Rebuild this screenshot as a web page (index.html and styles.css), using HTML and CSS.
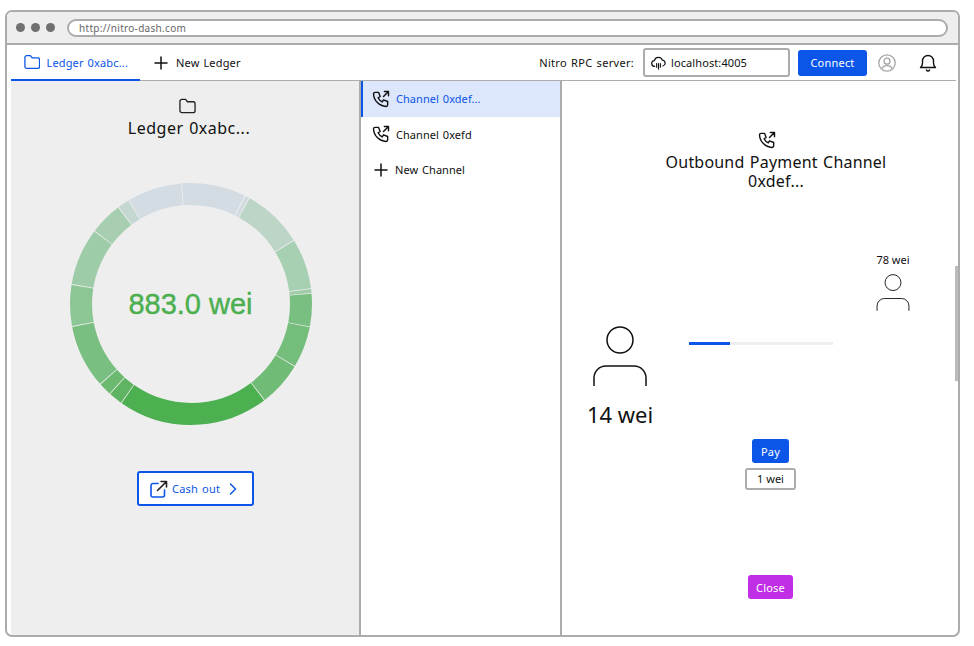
FILE: index.html
```html
<!DOCTYPE html>
<html lang="en">
<head>
    <meta charset="UTF-8">
    <meta name="viewport" content="width=device-width, initial-scale=1.0">
    <title>Nitro Dash</title>
    <link rel="stylesheet" href="styles.css">
</head>
<body>
    <svg class="defs" width="0" height="0">
        <symbol id="folder" viewBox="0 0 18 16">
            <path d="M3 1h4l2 2.500h6a2 2 0 0 1 2 2V13a2 2 0 0 1 -2 2H3a2 2 0 0 1 -2 -2V3a2 2 0 0 1 2 -2z" fill="none" stroke="currentColor" stroke-width="1.400" stroke-linejoin="round"/>
        </symbol>
        <symbol id="plus" viewBox="0 0 14 14">
            <path d="M7 1v12M1 7h12" fill="none" stroke="currentColor" stroke-width="1.500" stroke-linecap="round"/>
        </symbol>
        <symbol id="phone" viewBox="0 0 24 24">
            <path d="M5 4h4l2 5l-2.500 1.500a11 11 0 0 0 5 5l1.500 -2.500l5 2v4a2 2 0 0 1 -2 2a16 16 0 0 1 -15 -15a2 2 0 0 1 2 -2M15 9l6 -6M16 3h5v5" fill="none" stroke="currentColor" stroke-width="1.700" stroke-linecap="round" stroke-linejoin="round"/>
        </symbol>
        <symbol id="person" viewBox="0 0 54 62">
            <circle cx="27" cy="14" r="13" fill="none" stroke="currentColor" stroke-width="1.500"/>
            <path d="M1 60V52a12 12 0 0 1 12 -12h28a12 12 0 0 1 12 12v8" fill="none" stroke="currentColor" stroke-width="1.500"/>
        </symbol>
    </svg>

    <div class="window">
        <div class="chrome">
            <div class="dots"><span></span><span></span><span></span></div>
            <div class="url">http://nitro-dash.com</div>
        </div>

        <div class="topbar">
            <div class="tab active">
                <svg class="ic-folder"><use href="#folder"/></svg>
                <span>Ledger 0xabc...</span>
            </div>
            <div class="tab">
                <svg class="ic-plus"><use href="#plus"/></svg>
                <span>New Ledger</span>
            </div>
            <div class="rpc">
                <span class="rpc-label">Nitro RPC server:</span>
                <div class="rpc-input">
                    <svg class="ic-cloud" viewBox="0 0 16 16">
                        <path d="M4 11.500a3 3 0 0 1 -.4 -6a4.400 4.400 0 0 1 8.400 -.6a3.200 3.200 0 0 1 .6 6.300" fill="none" stroke="currentColor" stroke-width="1.300" stroke-linecap="round" stroke-linejoin="round"/>
                        <path d="M6 8.500v4M8 8.500v6M10 8.500v4" fill="none" stroke="currentColor" stroke-width="1.200" stroke-linecap="round"/>
                    </svg>
                    localhost:4005
                </div>
                <button class="btn btn-blue connect">Connect</button>
                <svg class="ic-avatar" viewBox="0 0 18 18">
                    <circle cx="9" cy="9" r="8.200" fill="none" stroke="#a6a6a6" stroke-width="1.300"/>
                    <circle cx="9" cy="7.200" r="3" fill="none" stroke="#a6a6a6" stroke-width="1.300"/>
                    <path d="M3.800 14.600c1 -2.400 2.800 -3 5.200 -3s4.200 .6 5.200 3" fill="none" stroke="#a6a6a6" stroke-width="1.300"/>
                </svg>
                <svg class="ic-bell" viewBox="0 0 18 18">
                    <path d="M1.500 13.500h15c-1.500 -1 -2 -2.500 -2 -4.500V7a5.500 5.500 0 0 0 -11 0v2c0 2 -.5 3.500 -2 4.500z" fill="none" stroke="currentColor" stroke-width="1.400" stroke-linejoin="round"/>
                    <path d="M7.500 16a1.600 1.600 0 0 0 3 0" fill="none" stroke="currentColor" stroke-width="1.400" stroke-linecap="round"/>
                </svg>
            </div>
        </div>

        <div class="main">
            <section class="ledger">
                <svg class="ic-folder-dark"><use href="#folder"/></svg>
                <h1 class="ledger-title">Ledger 0xabc...</h1>
                <div class="donut">
                    <svg viewBox="0 0 242 242" width="242" height="242">
                        <g class="ring" fill="none" stroke-width="22">
                            <circle cx="121" cy="121" r="110" pathLength="360" stroke="#d3dce3" stroke-dasharray="30.700 329.300" stroke-dashoffset="4.400"/>
                            <circle cx="121" cy="121" r="110" pathLength="360" stroke="#d1dbdf" stroke-dasharray="1.800 358.200" stroke-dashoffset="-26.800"/>
                            <circle cx="121" cy="121" r="110" pathLength="360" stroke="#bcd5c7" stroke-dasharray="29 331" stroke-dashoffset="-29"/>
                            <circle cx="121" cy="121" r="110" pathLength="360" stroke="#a7cfb2" stroke-dasharray="24 336" stroke-dashoffset="-58.400"/>
                            <circle cx="121" cy="121" r="110" pathLength="360" stroke="#a0ccaa" stroke-dasharray="1.900 358.100" stroke-dashoffset="-82.800"/>
                            <circle cx="121" cy="121" r="110" pathLength="360" stroke="#7abf82" stroke-dasharray="15.700 344.300" stroke-dashoffset="-85"/>
                            <circle cx="121" cy="121" r="110" pathLength="360" stroke="#74bd7b" stroke-dasharray="19.700 340.300" stroke-dashoffset="-101.100"/>
                            <circle cx="121" cy="121" r="110" pathLength="360" stroke="#70bb75" stroke-dasharray="21.200 338.800" stroke-dashoffset="-121.200"/>
                            <circle cx="121" cy="121" r="110" pathLength="360" stroke="#4caf50" stroke-dasharray="72.200 287.800" stroke-dashoffset="-142.800"/>
                            <circle cx="121" cy="121" r="110" pathLength="360" stroke="#5fb463" stroke-dasharray="6.500 353.500" stroke-dashoffset="-215.400"/>
                            <circle cx="121" cy="121" r="110" pathLength="360" stroke="#6cb970" stroke-dasharray="6 354" stroke-dashoffset="-222.300"/>
                            <circle cx="121" cy="121" r="110" pathLength="360" stroke="#7abf82" stroke-dasharray="30.400 329.600" stroke-dashoffset="-228.700"/>
                            <circle cx="121" cy="121" r="110" pathLength="360" stroke="#8cc694" stroke-dasharray="19.600 340.400" stroke-dashoffset="-259.500"/>
                            <circle cx="121" cy="121" r="110" pathLength="360" stroke="#9fcca8" stroke-dasharray="27.400 332.600" stroke-dashoffset="-279.500"/>
                            <circle cx="121" cy="121" r="110" pathLength="360" stroke="#a8ceb2" stroke-dasharray="15.600 344.400" stroke-dashoffset="-307.300"/>
                            <circle cx="121" cy="121" r="110" pathLength="360" stroke="#c4d7d0" stroke-dasharray="5.500 354.500" stroke-dashoffset="-323.300"/>
                            <circle cx="121" cy="121" r="110" pathLength="360" stroke="#d3dce3" stroke-dasharray="26 334" stroke-dashoffset="-329.200"/>
                        </g>
                    </svg>
                    <div class="donut-label">883.0 wei</div>
                </div>
                <button class="cashout">
                    <svg class="ic-cash" viewBox="0 0 18 18">
                        <path d="M8 3.500H3a2 2 0 0 0 -2 2V15a2 2 0 0 0 2 2h9.500a2 2 0 0 0 2 -2v-5" fill="none" stroke="#0b55e8" stroke-width="1.600" stroke-linecap="round"/>
                        <path d="M7.500 10.500L16.500 1.500M11 1.500h5.500V7" fill="none" stroke="#222" stroke-width="1.600" stroke-linecap="round" stroke-linejoin="round"/>
                    </svg>
                    <span>Cash out</span>
                    <svg class="ic-chevron" viewBox="0 0 8 12">
                        <path d="M1.500 1l5 5l-5 5" fill="none" stroke="#0b55e8" stroke-width="1.500" stroke-linecap="round" stroke-linejoin="round"/>
                    </svg>
                </button>
            </section>

            <nav class="channels">
                <div class="channel active">
                    <svg class="ic-phone"><use href="#phone"/></svg>
                    <span>Channel 0xdef...</span>
                </div>
                <div class="channel">
                    <svg class="ic-phone"><use href="#phone"/></svg>
                    <span>Channel 0xefd</span>
                </div>
                <div class="channel">
                    <svg class="ic-plus-small"><use href="#plus"/></svg>
                    <span>New Channel</span>
                </div>
            </nav>

            <section class="detail">
                <div class="scrollthumb"></div>
                <svg class="ic-phone-title"><use href="#phone"/></svg>
                <h2 class="detail-title">Outbound Payment Channel<br>0xdef...</h2>
                <div class="parties">
                    <div class="party">
                        <svg class="person-big"><use href="#person"/></svg>
                        <div class="party-big-amount">14 wei</div>
                    </div>
                    <div class="progress"><div class="progress-fill" style="width: 28.500%"></div></div>
                    <div class="party party-small">
                        <div class="party-small-amount">78 wei</div>
                        <svg class="person-small"><use href="#person"/></svg>
                    </div>
                </div>
                <div class="actions">
                    <button class="btn btn-blue pay">Pay</button>
                    <div class="amount">1 wei</div>
                    <button class="btn btn-purple close">Close</button>
                </div>
            </section>
        </div>
    </div>
</body>
</html>
```

FILE: styles.css
```css
* {
    box-sizing: border-box;
}
html, body {
    height: 100%;
}
body {
    margin: 0;
    padding: 10px 14px 9px 5px;
    background: #fff;
    color: #111;
    font-family: "Noto Sans", Arial, sans-serif;
    font-size: 11px;
    overflow: hidden;
}
.defs {
    position: absolute;
}
h1, h2 {
    margin: 0;
    font-weight: 400;
}
button {
    font-family: inherit;
    cursor: pointer;
}
.window {
    height: 100%;
    display: flex;
    flex-direction: column;
    border: 2.500px solid #acacac;
    border-radius: 7px;
    overflow: hidden;
    background: #fff;
}
.chrome {
    height: 33px;
    flex: none;
    display: flex;
    align-items: center;
    gap: 12px;
    padding: 0 10px 0 9px;
    background: #eee;
    border-bottom: 2px solid #acacac;
}
.dots {
    display: flex;
    gap: 6px;
}
.dots span {
    width: 9px;
    height: 9px;
    border-radius: 50%;
    background: #707070;
}
.url {
    flex: 1;
    height: 18px;
    padding: 0 10px;
    line-height: 14px;
    font-size: 10px;
    letter-spacing: .3px;
    color: #666;
    background: #fff;
    border: 2px solid #acacac;
    border-radius: 9px;
}
.topbar {
    height: 36px;
    flex: none;
    display: flex;
    align-items: stretch;
    margin: 0 2px 0 4px;
    border-bottom: 1px solid #acacac;
}
.tab {
    display: flex;
    align-items: center;
    gap: 6px;
    padding: 0 12px 0 13px;
    white-space: nowrap;
    letter-spacing: .15px;
    word-spacing: 1px;
}
.tab.active {
    width: 129px;
    color: #0b55e8;
    border-bottom: 2px solid #0b55e8;
    margin-bottom: -1px;
}
.tab + .tab {
    padding-left: 14px;
    gap: 8px;
}
.ic-folder {
    width: 18px;
    height: 16px;
}
.ic-plus {
    width: 14px;
    height: 14px;
}
.rpc {
    margin-left: auto;
    display: flex;
    align-items: center;
    padding-right: 19px;
}
.rpc-label {
    margin-right: 9px;
    letter-spacing: .3px;
    word-spacing: 1px;
}
.rpc-input {
    width: 147px;
    height: 29px;
    display: flex;
    align-items: center;
    gap: 5px;
    padding: 0 6px;
    letter-spacing: .1px;
    background: #fff;
    border: 2px solid #acacac;
    border-radius: 3px;
}
.ic-cloud {
    width: 15px;
    height: 16px;
}
.btn {
    border: none;
    border-radius: 3px;
    color: #fff;
    font-size: 11px;
    letter-spacing: .2px;
}
.btn-blue {
    background: #0b55e8;
}
.btn-purple {
    background: #c02ee6;
}
.connect {
    width: 69px;
    height: 26px;
    margin-left: 8px;
}
.ic-avatar {
    width: 18px;
    height: 18px;
    margin-left: 11px;
}
.ic-bell {
    width: 18px;
    height: 18px;
    margin-left: 23px;
}
.main {
    flex: 1;
    min-height: 0;
    display: flex;
    margin: 0 0 0 4px;
}
.ledger {
    width: 348px;
    flex: none;
    display: flex;
    flex-direction: column;
    align-items: center;
    padding-top: 17px;
    background: #eee;
}
.ic-folder-dark {
    width: 17px;
    height: 16px;
    margin-left: 5px;
    color: #222;
}
.ledger-title {
    margin: 2px 0 0 8px;
    font-size: 16px;
    line-height: 24px;
    letter-spacing: .5px;
    word-spacing: 1px;
}
.donut {
    position: relative;
    width: 242px;
    height: 242px;
    margin: 43px 0 0 11px;
}
.ring {
    transform: rotate(-90deg);
    transform-origin: 121px 121px;
}
.donut-label {
    position: absolute;
    inset: 0;
    display: flex;
    align-items: center;
    justify-content: center;
    color: #4caf50;
    font-family: "Liberation Sans", Arial, sans-serif;
    font-size: 29px;
    -webkit-text-stroke: .4px #4caf50;
}
.cashout {
    width: 117px;
    height: 35px;
    margin: 46px 0 0 21px;
    display: flex;
    align-items: center;
    padding: 0 15px 0 11px;
    color: #0b55e8;
    font-size: 11px;
    letter-spacing: .2px;
    word-spacing: 1px;
    background: #fff;
    border: 2px solid #0b55e8;
    border-radius: 3px;
}
.ic-cash {
    width: 18px;
    height: 18px;
    margin-right: 4px;
}
.ic-chevron {
    width: 8px;
    height: 12px;
    margin-left: auto;
}
.channels {
    width: 203px;
    flex: none;
    border-left: 2px solid #acacac;
    border-right: 2px solid #acacac;
}
.channel {
    height: 35.500px;
    display: flex;
    align-items: center;
    gap: 5px;
    padding-left: 10px;
    letter-spacing: .05px;
    word-spacing: 1px;
}
.channel.active {
    color: #0b55e8;
    background: #dde7fb;
    box-shadow: inset 2px 0 0 #0b55e8;
}
.channel.active .ic-phone {
    color: #111;
}
.ic-phone {
    width: 20px;
    height: 20px;
}
.ic-plus-small {
    width: 14px;
    height: 14px;
    margin: 0 2px 0 3px;
}
.detail {
    position: relative;
    flex: 1;
    min-width: 0;
    display: flex;
    flex-direction: column;
    align-items: center;
}
.scrollthumb {
    position: absolute;
    top: 185px;
    right: 0;
    width: 3px;
    height: 115px;
    background: #bbb;
}
.ic-phone-title {
    width: 20px;
    height: 20px;
    flex: none;
    margin: 49px 0 0 13px;
}
.detail-title {
    margin: 3px 0 0 32px;
    font-size: 16px;
    line-height: 19px;
    text-align: center;
    letter-spacing: .2px;
    word-spacing: 1px;
}
.parties {
    position: relative;
    width: 100%;
    height: 228px;
    flex: none;
    display: flex;
    padding: 135px 47px 0 31px;
}
.party {
    width: 54px;
    display: flex;
    flex-direction: column;
    align-items: center;
    flex: none;
    height: max-content;
}
.person-big {
    width: 54px;
    height: 62px;
    flex: none;
}
.party-big-amount {
    margin-top: 11px;
    font-size: 22px;
    line-height: 30px;
    white-space: nowrap;
}
.progress {
    width: 144px;
    height: 3px;
    flex: none;
    margin: 16px 0 0 42px;
    background: #eee;
}
.progress-fill {
    height: 100%;
    background: #0b55e8;
}
.party-small {
    width: 34px;
    margin: -74px 0 0 43px;
}
.party-small-amount {
    margin-bottom: 6px;
    line-height: 16px;
    white-space: nowrap;
}
.person-small {
    width: 34px;
    height: 38px;
    flex: none;
}
.actions {
    display: flex;
    flex-direction: column;
    align-items: center;
    margin-left: 21px;
    padding-top: 20px;
}
.pay {
    width: 37px;
    height: 24px;
}
.amount {
    width: 51px;
    height: 22px;
    margin-top: 5px;
    text-align: center;
    line-height: 18px;
    border: 2px solid #acacac;
    border-radius: 3px;
}
.close {
    width: 45px;
    height: 24px;
    margin-top: 85px;
}
```
